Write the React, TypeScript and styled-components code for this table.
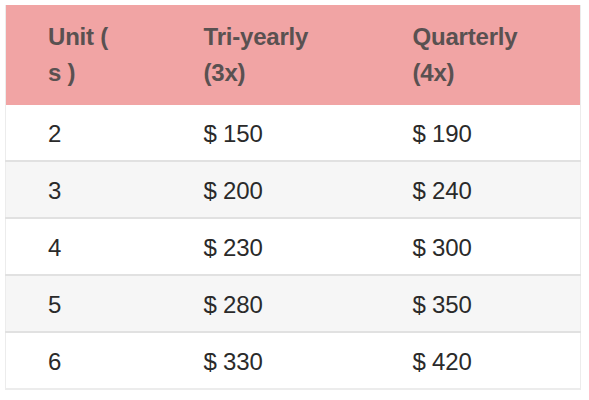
import React from "react";
import styled, { createGlobalStyle } from "styled-components";

const Global = createGlobalStyle`
  html, body { margin: 0; padding: 0; background: #ffffff; }
  body { font-family: "Liberation Sans", Arial, sans-serif; }
`;

const Wrap = styled.div`
  padding: 5px 0 0 5px;
`;

const Table = styled.table`
  width: 576px;
  border-collapse: collapse;
  table-layout: fixed;
  border-left: 1px solid #ececec;
  border-right: 1px solid #ececec;
  border-bottom: 2px solid #ececec;
`;

const HeadCell = styled.th`
  background: #f1a4a4;
  color: #595151;
  font-size: 24px;
  font-weight: 700;
  line-height: 36px;
  text-align: left;
  vertical-align: top;
  padding: 14px 10px 14px 42px;
  height: 72px;
  letter-spacing: -0.2px;
`;

const Row = styled.tr<{ $striped: boolean }>`
  background: ${(p) => (p.$striped ? "#f6f6f6" : "#ffffff")};
  border-bottom: 2px solid #e1e1e1;
  &:last-child { border-bottom: none; }
`;

const Cell = styled.td`
  color: #2a2a2a;
  font-size: 24px;
  line-height: 36px;
  padding: 11px 10px 8px 42px;
  height: 36px;
  letter-spacing: -0.2px;
`;

const rows = [
  ["2", "$ 150", "$ 190"],
  ["3", "$ 200", "$ 240"],
  ["4", "$ 230", "$ 300"],
  ["5", "$ 280", "$ 350"],
  ["6", "$ 330", "$ 420"],
];

export default function App() {
  return (
    <Wrap>
      <Global />
      <Table>
        <colgroup>
          <col style={{ width: 156 }} />
          <col style={{ width: 209 }} />
          <col />
        </colgroup>
        <thead>
          <tr>
            <HeadCell>
              Unit (<br />s )
            </HeadCell>
            <HeadCell>
              Tri-yearly
              <br />
              (3x)
            </HeadCell>
            <HeadCell>
              Quarterly
              <br />
              (4x)
            </HeadCell>
          </tr>
        </thead>
        <tbody>
          {rows.map((r, i) => (
            <Row key={r[0]} $striped={i % 2 === 1}>
              {r.map((c, j) => (
                <Cell key={j}>{c}</Cell>
              ))}
            </Row>
          ))}
        </tbody>
      </Table>
    </Wrap>
  );
}
